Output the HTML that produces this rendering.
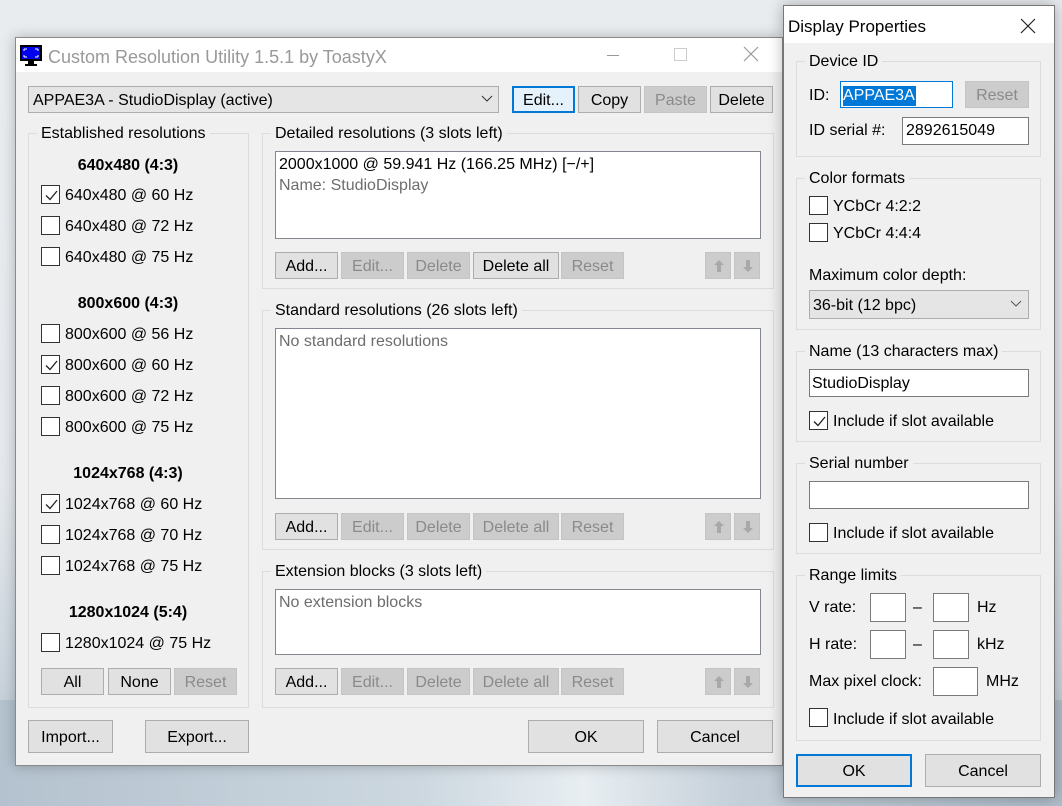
<!DOCTYPE html>
<html><head><meta charset="utf-8"><style>
*{margin:0;padding:0;box-sizing:border-box}
body{width:1062px;height:806px;overflow:hidden;position:relative;font-family:"Liberation Sans",sans-serif;font-size:16px;color:#000;
background:linear-gradient(180deg,#e9ecef 0%,#e4e8ec 60%,#c9d3dc 85%,#aab8c6 100%)}
.a{position:absolute}
.t{position:absolute;white-space:nowrap;line-height:20px;height:20px;margin-top:1px}
.b{position:absolute;border:1px solid #adadad;background:#e1e1e1;text-align:center;white-space:nowrap;padding-top:1px}
.d{background:#cccccc;border-color:#c4c4c4;color:#8a8a8a}
.g{position:absolute;border:1px solid #dcdcdc}
.gl{position:absolute;background:#f0f0f0;padding:0 4px;line-height:20px;white-space:nowrap;margin-top:1px}
.cb{position:absolute;width:19px;height:19px;border:1px solid #333;background:#fff}
.cb svg{position:absolute;left:1px;top:1px}
.in{position:absolute;background:#fff;border:1px solid #7a7a7a}
.bo{font-weight:bold;text-align:center;width:200px}
.ar svg{position:absolute;left:6px;top:6px}
</style></head><body>
<div class="a" style="left:0;top:700px;width:1062px;height:106px;background:linear-gradient(90deg,#b4c2cf,#cdd8e0 40%,#e8eef2 55%,#c3ced8 70%,#aebdca)"></div>

<!-- main window -->
<div class="a" style="left:15px;top:37px;width:768px;height:729px;background:#f0f0f0;border:1px solid #8a8a8a;box-shadow:0 0 12px rgba(0,0,0,.25)"></div>
<div class="a" style="left:16px;top:38px;width:766px;height:34px;background:#fff"></div>
<svg class="a" style="left:20px;top:45px" width="22" height="22"><rect x="0" y="0" width="22" height="16" fill="#000"/><rect x="2" y="2" width="18" height="12" fill="#0000ee"/><rect x="8" y="16" width="6" height="3" fill="#000"/><rect x="5" y="19" width="12" height="2" fill="#000"/><path d="M4 4h3M4 4v2M18 4h-3M18 4v2M4 12h3M4 12v-2M18 12h-3M18 12v-2" stroke="#fff" stroke-width="1"/></svg>
<div class="t" style="left:48px;top:46px;font-size:18px;color:#999">Custom Resolution Utility 1.5.1 by ToastyX</div>
<div class="a" style="left:607px;top:55px;width:12px;height:1px;background:#999"></div>
<div class="a" style="left:674px;top:48px;width:13px;height:13px;border:1px solid #ccc"></div>
<svg class="a" style="left:743px;top:46px" width="16" height="16"><path d="M1 1L15 15M15 1L1 15" stroke="#999" stroke-width="1.2"/></svg>

<div class="b" style="left:28px;top:86px;width:471px;height:27px;text-align:left;padding-left:4px;line-height:25px;background:#e5e5e5">APPAE3A - StudioDisplay (active)</div>
<svg class="a" style="left:481px;top:95px" width="12" height="8"><path d="M1 1L6 6L11 1" stroke="#333" fill="none"/></svg>
<div class="b" style="left:512px;top:86px;width:63px;height:27px;border:2px solid #0078d7;line-height:23px;background:#e5f1fb">Edit...</div>
<div class="b" style="left:578px;top:86px;width:63px;height:27px;line-height:25px">Copy</div>
<div class="b d" style="left:644px;top:86px;width:63px;height:27px;line-height:25px">Paste</div>
<div class="b" style="left:710px;top:86px;width:63px;height:27px;line-height:25px">Delete</div>

<!-- Established -->
<div class="g" style="left:28px;top:133px;width:221px;height:575px"></div>
<div class="gl" style="left:37px;top:123px">Established resolutions</div>
<div class="t bo" style="left:28px;top:155px">640x480 (4:3)</div>
<div class="cb" style="left:41px;top:185px"><svg width="17" height="17"><path d="M3 8.5L7 12.5L14 4" stroke="#222" fill="none" stroke-width="1.3"/></svg></div><div class="t" style="left:65px;top:185px">640x480 @ 60 Hz</div>
<div class="cb" style="left:41px;top:216px"></div><div class="t" style="left:65px;top:216px">640x480 @ 72 Hz</div>
<div class="cb" style="left:41px;top:247px"></div><div class="t" style="left:65px;top:247px">640x480 @ 75 Hz</div>
<div class="t bo" style="left:28px;top:293px">800x600 (4:3)</div>
<div class="cb" style="left:41px;top:324px"></div><div class="t" style="left:65px;top:324px">800x600 @ 56 Hz</div>
<div class="cb" style="left:41px;top:355px"><svg width="17" height="17"><path d="M3 8.5L7 12.5L14 4" stroke="#222" fill="none" stroke-width="1.3"/></svg></div><div class="t" style="left:65px;top:355px">800x600 @ 60 Hz</div>
<div class="cb" style="left:41px;top:386px"></div><div class="t" style="left:65px;top:386px">800x600 @ 72 Hz</div>
<div class="cb" style="left:41px;top:417px"></div><div class="t" style="left:65px;top:417px">800x600 @ 75 Hz</div>
<div class="t bo" style="left:28px;top:463px">1024x768 (4:3)</div>
<div class="cb" style="left:41px;top:494px"><svg width="17" height="17"><path d="M3 8.5L7 12.5L14 4" stroke="#222" fill="none" stroke-width="1.3"/></svg></div><div class="t" style="left:65px;top:494px">1024x768 @ 60 Hz</div>
<div class="cb" style="left:41px;top:525px"></div><div class="t" style="left:65px;top:525px">1024x768 @ 70 Hz</div>
<div class="cb" style="left:41px;top:556px"></div><div class="t" style="left:65px;top:556px">1024x768 @ 75 Hz</div>
<div class="t bo" style="left:28px;top:602px">1280x1024 (5:4)</div>
<div class="cb" style="left:41px;top:633px"></div><div class="t" style="left:65px;top:633px">1280x1024 @ 75 Hz</div>
<div class="b" style="left:41px;top:668px;width:63px;height:27px;line-height:25px">All</div>
<div class="b" style="left:108px;top:668px;width:63px;height:27px;line-height:25px">None</div>
<div class="b d" style="left:174px;top:668px;width:63px;height:27px;line-height:25px">Reset</div>

<!-- Detailed -->
<div class="g" style="left:262px;top:133px;width:512px;height:156px"></div>
<div class="gl" style="left:271px;top:123px">Detailed resolutions (3 slots left)</div>
<div class="in" style="left:275px;top:151px;width:486px;height:88px;border-color:#828790"></div>
<div class="t" style="left:279px;top:154px">2000x1000 @ 59.941 Hz (166.25 MHz) [−/+]</div>
<div class="t" style="left:279px;top:175px;color:#6d6d6d">Name: StudioDisplay</div>
<div class="b" style="left:275px;top:252px;width:63px;height:27px;line-height:25px">Add...</div>
<div class="b d" style="left:341px;top:252px;width:63px;height:27px;line-height:25px">Edit...</div>
<div class="b d" style="left:407px;top:252px;width:63px;height:27px;line-height:25px">Delete</div>
<div class="b" style="left:473px;top:252px;width:86px;height:27px;line-height:25px">Delete all</div>
<div class="b d" style="left:561px;top:252px;width:63px;height:27px;line-height:25px">Reset</div>
<div class="b d ar" style="left:705px;top:252px;width:26px;height:27px"><svg width="14" height="14"><path d="M7 1L12 6H9V13H5V6H2Z" fill="#a8a8a8"/></svg></div>
<div class="b d ar" style="left:734px;top:252px;width:26px;height:27px"><svg width="14" height="14"><path d="M7 13L12 8H9V1H5V8H2Z" fill="#a8a8a8"/></svg></div>

<!-- Standard -->
<div class="g" style="left:262px;top:310px;width:512px;height:240px"></div>
<div class="gl" style="left:271px;top:300px">Standard resolutions (26 slots left)</div>
<div class="in" style="left:275px;top:328px;width:486px;height:171px;border-color:#828790"></div>
<div class="t" style="left:279px;top:331px;color:#6d6d6d">No standard resolutions</div>
<div class="b" style="left:275px;top:513px;width:63px;height:27px;line-height:25px">Add...</div>
<div class="b d" style="left:341px;top:513px;width:63px;height:27px;line-height:25px">Edit...</div>
<div class="b d" style="left:407px;top:513px;width:63px;height:27px;line-height:25px">Delete</div>
<div class="b d" style="left:473px;top:513px;width:86px;height:27px;line-height:25px">Delete all</div>
<div class="b d" style="left:561px;top:513px;width:63px;height:27px;line-height:25px">Reset</div>
<div class="b d ar" style="left:705px;top:513px;width:26px;height:27px"><svg width="14" height="14"><path d="M7 1L12 6H9V13H5V6H2Z" fill="#a8a8a8"/></svg></div>
<div class="b d ar" style="left:734px;top:513px;width:26px;height:27px"><svg width="14" height="14"><path d="M7 13L12 8H9V1H5V8H2Z" fill="#a8a8a8"/></svg></div>

<!-- Extension -->
<div class="g" style="left:262px;top:571px;width:512px;height:137px"></div>
<div class="gl" style="left:271px;top:561px">Extension blocks (3 slots left)</div>
<div class="in" style="left:275px;top:589px;width:486px;height:66px;border-color:#828790"></div>
<div class="t" style="left:279px;top:592px;color:#6d6d6d">No extension blocks</div>
<div class="b" style="left:275px;top:668px;width:63px;height:27px;line-height:25px">Add...</div>
<div class="b d" style="left:341px;top:668px;width:63px;height:27px;line-height:25px">Edit...</div>
<div class="b d" style="left:407px;top:668px;width:63px;height:27px;line-height:25px">Delete</div>
<div class="b d" style="left:473px;top:668px;width:86px;height:27px;line-height:25px">Delete all</div>
<div class="b d" style="left:561px;top:668px;width:63px;height:27px;line-height:25px">Reset</div>
<div class="b d ar" style="left:705px;top:668px;width:26px;height:27px"><svg width="14" height="14"><path d="M7 1L12 6H9V13H5V6H2Z" fill="#a8a8a8"/></svg></div>
<div class="b d ar" style="left:734px;top:668px;width:26px;height:27px"><svg width="14" height="14"><path d="M7 13L12 8H9V1H5V8H2Z" fill="#a8a8a8"/></svg></div>

<div class="b" style="left:28px;top:720px;width:85px;height:33px;line-height:31px">Import...</div>
<div class="b" style="left:145px;top:720px;width:104px;height:33px;line-height:31px">Export...</div>
<div class="b" style="left:528px;top:720px;width:116px;height:33px;line-height:31px">OK</div>
<div class="b" style="left:657px;top:720px;width:116px;height:33px;line-height:31px">Cancel</div>

<!-- dialog -->
<div class="a" style="left:783px;top:5px;width:272px;height:793px;background:#f0f0f0;border:1px solid #777;box-shadow:0 0 14px rgba(0,0,0,.3)"></div>
<div class="a" style="left:784px;top:6px;width:270px;height:37px;background:#fff"></div>
<div class="t" style="left:788px;top:16px;font-size:17px">Display Properties</div>
<svg class="a" style="left:1020px;top:18px" width="16" height="16"><path d="M1 1L15 15M15 1L1 15" stroke="#222" stroke-width="1.2"/></svg>

<div class="g" style="left:796px;top:61px;width:245px;height:96px"></div>
<div class="gl" style="left:805px;top:51px">Device ID</div>
<div class="t" style="left:809px;top:85px">ID:</div>
<div class="in" style="left:840px;top:81px;width:113px;height:27px;border-color:#0078d7"></div>
<div class="t" style="left:843px;top:85px;background:#0078d7;color:#fff;padding-right:1px">APPAE3A</div>
<div class="b d" style="left:965px;top:81px;width:64px;height:27px;line-height:25px">Reset</div>
<div class="t" style="left:809px;top:120px">ID serial #:</div>
<div class="in" style="left:902px;top:117px;width:127px;height:28px"></div>
<div class="t" style="left:906px;top:120px">2892615049</div>

<div class="g" style="left:796px;top:178px;width:245px;height:152px"></div>
<div class="gl" style="left:805px;top:168px">Color formats</div>
<div class="cb" style="left:809px;top:196px"></div><div class="t" style="left:833px;top:196px">YCbCr 4:2:2</div>
<div class="cb" style="left:809px;top:223px"></div><div class="t" style="left:833px;top:223px">YCbCr 4:4:4</div>
<div class="t" style="left:809px;top:265px">Maximum color depth:</div>
<div class="b" style="left:809px;top:290px;width:220px;height:29px;line-height:27px;text-align:left;padding-left:3px;background:#e5e5e5">36-bit (12 bpc)</div>
<svg class="a" style="left:1010px;top:300px" width="12" height="8"><path d="M1 1L6 6L11 1" stroke="#555" fill="none"/></svg>

<div class="g" style="left:796px;top:351px;width:245px;height:91px"></div>
<div class="gl" style="left:805px;top:341px">Name (13 characters max)</div>
<div class="in" style="left:809px;top:369px;width:220px;height:28px"></div>
<div class="t" style="left:812px;top:373px">StudioDisplay</div>
<div class="cb" style="left:809px;top:411px"><svg width="17" height="17"><path d="M3 8.5L7 12.5L14 4" stroke="#222" fill="none" stroke-width="1.3"/></svg></div><div class="t" style="left:833px;top:411px">Include if slot available</div>

<div class="g" style="left:796px;top:463px;width:245px;height:91px"></div>
<div class="gl" style="left:805px;top:453px">Serial number</div>
<div class="in" style="left:809px;top:481px;width:220px;height:28px"></div>
<div class="cb" style="left:809px;top:523px"></div><div class="t" style="left:833px;top:523px">Include if slot available</div>

<div class="g" style="left:796px;top:575px;width:245px;height:166px"></div>
<div class="gl" style="left:805px;top:565px">Range limits</div>
<div class="t" style="left:809px;top:597px">V rate:</div>
<div class="in" style="left:870px;top:593px;width:36px;height:29px"></div>
<div class="t" style="left:913px;top:597px">–</div>
<div class="in" style="left:933px;top:593px;width:36px;height:29px"></div>
<div class="t" style="left:977px;top:597px">Hz</div>
<div class="t" style="left:809px;top:634px">H rate:</div>
<div class="in" style="left:870px;top:630px;width:36px;height:29px"></div>
<div class="t" style="left:913px;top:634px">–</div>
<div class="in" style="left:933px;top:630px;width:36px;height:29px"></div>
<div class="t" style="left:977px;top:634px">kHz</div>
<div class="t" style="left:809px;top:671px">Max pixel clock:</div>
<div class="in" style="left:933px;top:667px;width:45px;height:29px"></div>
<div class="t" style="left:986px;top:671px">MHz</div>
<div class="cb" style="left:809px;top:708px"></div><div class="t" style="left:833px;top:709px">Include if slot available</div>

<div class="b" style="left:796px;top:754px;width:116px;height:33px;line-height:29px;border:2px solid #0078d7">OK</div>
<div class="b" style="left:925px;top:754px;width:116px;height:33px;line-height:31px">Cancel</div>
</body></html>
